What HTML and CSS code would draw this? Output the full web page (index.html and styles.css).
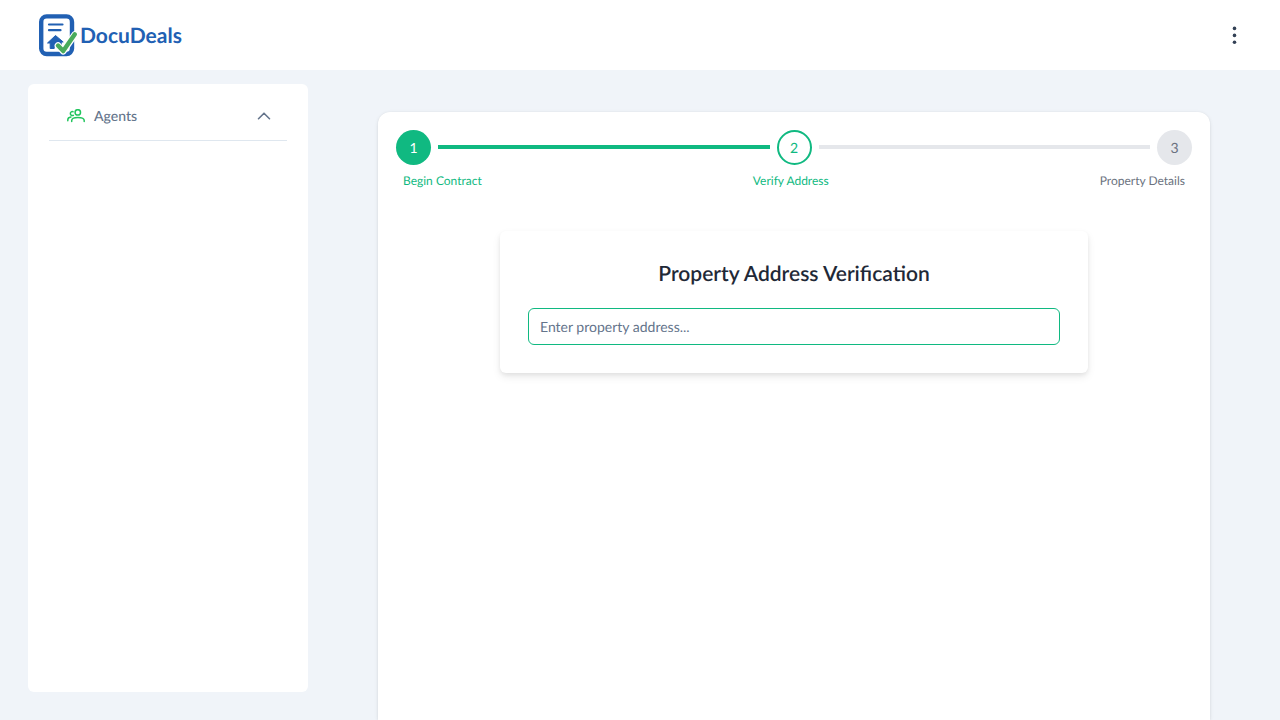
FILE: index.html
```html
<!DOCTYPE html>
<html lang="en">
<head>
  <meta charset="utf-8">
  <meta name="viewport" content="width=device-width, initial-scale=1">
  <title>DocuDeals</title>
  <link rel="stylesheet" href="styles.css">
</head>
<body>
  <header class="topbar">
    <a class="brand" href="#">
      <svg class="brand-mark" viewBox="0 0 40 44" width="40" height="44" aria-hidden="true">
        <rect x="3.200" y="3.400" width="30.800" height="37.600" rx="5.500" fill="#fff" stroke="#2160b3" stroke-width="4.400"/>
        <path d="M11 11.500h13.500M11 17.200h11.500" stroke="#2160b3" stroke-width="2.200" stroke-linecap="round"/>
        <path d="M17.500 22.500L9.500 30h2.700v5.500h4v-3.500h3v3.500h4V29h2z" fill="#2160b3" stroke="#2160b3" stroke-linejoin="round"/>
        <path d="M20 32.500l5.200 5.800L36.800 21.500" fill="none" stroke="#fff" stroke-width="6.600" stroke-linejoin="round" stroke-linecap="round"/>
        <path d="M20 32.500l5.200 5.600L36.800 21.200" fill="none" stroke="#49ab5c" stroke-width="4.400" stroke-linejoin="round" stroke-linecap="round"/>
      </svg>
      <span class="brand-name">DocuDeals</span>
    </a>
    <button class="menu-button" type="button" aria-label="Menu">
      <svg viewBox="0 0 18 18" width="18" height="18" fill="#334155" aria-hidden="true">
        <circle cx="9.500" cy="2.400" r="1.800"/><circle cx="9.500" cy="9.400" r="1.800"/><circle cx="9.500" cy="16.200" r="1.800"/>
      </svg>
    </button>
  </header>

  <div class="layout">
    <aside class="sidebar">
      <button class="nav-group" type="button" aria-expanded="true">
        <svg viewBox="0 0 18 14" width="18" height="14" fill="none" stroke="#22c55e" stroke-width="1.500" stroke-linecap="round" aria-hidden="true">
          <circle cx="10.800" cy="3.400" r="2.700"/>
          <path d="M4.700 12.400v-.9c0-2 2.700-3.100 6.200-3.100s6.300 1.100 6.300 3.100v.9"/>
          <path d="M6 2.700a2 2 0 1 0 .4 3.600M.8 11.800v-1c0-1.500 1.300-2.600 3.100-2.800"/>
        </svg>
        <span class="nav-label">Agents</span>
        <svg viewBox="0 0 14 14" width="14" height="14" fill="none" stroke="#64748b" stroke-width="1.600" stroke-linecap="round" stroke-linejoin="round" aria-hidden="true">
          <path d="M1.500 9.700L7 4.200l5.500 5.500"/>
        </svg>
      </button>
    </aside>

    <main class="panel">
      <div class="steps">
        <span class="step step-done">1</span>
        <span class="track track-done"></span>
        <span class="step step-current">2</span>
        <span class="track"></span>
        <span class="step">3</span>
      </div>
      <div class="step-labels">
        <span class="label-active">Begin Contract</span>
        <span class="label-active">Verify Address</span>
        <span>Property Details</span>
      </div>

      <section class="card">
        <h2 class="card-title"><label for="address">Property Address Verification</label></h2>
        <input class="address" id="address" type="text" placeholder="Enter property address...">
      </section>
    </main>
  </div>
</body>
</html>
```

FILE: styles.css
```css
* {
  box-sizing: border-box;
}

body {
  margin: 0;
  min-height: 100vh;
  display: flex;
  flex-direction: column;
  background: #f0f4f9;
  color: #64748b;
  font-family: Lato, "Liberation Sans", sans-serif;
  font-size: 14px;
  line-height: 21px;
  text-rendering: geometricPrecision;
}

button,
input {
  font: inherit;
  color: inherit;
  text-rendering: inherit;
}

.topbar {
  flex: none;
  display: flex;
  align-items: center;
  justify-content: space-between;
  height: 70px;
  padding: 0 28px 0 38px;
  background: #fff;
}

.brand {
  display: flex;
  align-items: center;
  gap: 2px;
  color: #2160b3;
  text-decoration: none;
}

.brand-name {
  padding-top: 2px;
  font-size: 21px;
  line-height: 24px;
  font-weight: 700;
}

.menu-button {
  display: grid;
  place-items: center;
  width: 36px;
  height: 36px;
  padding: 0;
  border: 0;
  border-radius: 50%;
  background: none;
}

.layout {
  flex: 1;
  display: flex;
  align-items: flex-start;
  gap: 70px;
  padding: 14px 70px 0 28px;
}

.sidebar {
  flex: none;
  width: 280px;
  height: calc(100vh - 112px);
  padding: 7px 21px;
  border-radius: 6px;
  background: #fff;
}

.nav-group {
  display: flex;
  align-items: center;
  width: 100%;
  height: 50px;
  padding: 0 16px 0 18px;
  gap: 9px;
  border: 0;
  border-bottom: 1px solid #dfe7ef;
  background: none;
  text-align: left;
}

.nav-label {
  flex: 1;
  font-weight: 500;
}

.panel {
  flex: 1;
  align-self: stretch;
  min-width: 0;
  margin-top: 28px;
  padding: 18px;
  border-radius: 12px 12px 0 0;
  background: #fff;
  box-shadow: 0 3px 5px rgba(0, 0, 0, 0.02), 0 0 2px rgba(0, 0, 0, 0.05), 0 1px 4px rgba(0, 0, 0, 0.08);
}

.steps {
  display: flex;
  align-items: center;
  gap: 7px;
}

.step {
  flex: none;
  display: grid;
  place-items: center;
  width: 35px;
  height: 35px;
  border-radius: 50%;
  background: #e5e7eb;
  color: #6b7280;
}

.step-done {
  background: #10b981;
  color: #fff;
}

.step-current {
  border: 2px solid #10b981;
  background: #fff;
  color: #10b981;
}

.track {
  flex: 1;
  height: 4px;
  margin-bottom: 1px;
  background: #e5e7eb;
}

.track-done {
  background: #10b981;
}

.step-labels {
  display: flex;
  justify-content: space-between;
  margin-top: 7px;
  padding: 0 7px;
  color: #6b7280;
  font-size: 12px;
  line-height: 18px;
}

.label-active {
  color: #10b981;
}

.card {
  max-width: 588px;
  margin: 41px auto 0;
  padding: 28px;
  border-radius: 6px;
  background: #fff;
  box-shadow: 0 4px 8px rgba(0, 0, 0, 0.08), 0 2px 4px rgba(0, 0, 0, 0.06);
}

.card-title {
  margin: 0 0 19px;
  color: #1f2937;
  font-size: 21px;
  line-height: 30px;
  font-weight: 600;
  text-align: center;
}

.address {
  display: block;
  width: 100%;
  height: 37px;
  padding: 0 11px;
  border: 1px solid #10b981;
  border-radius: 6px;
  background: #fff;
  outline: none;
}

.address::placeholder {
  color: #64748b;
  opacity: 1;
}
```
